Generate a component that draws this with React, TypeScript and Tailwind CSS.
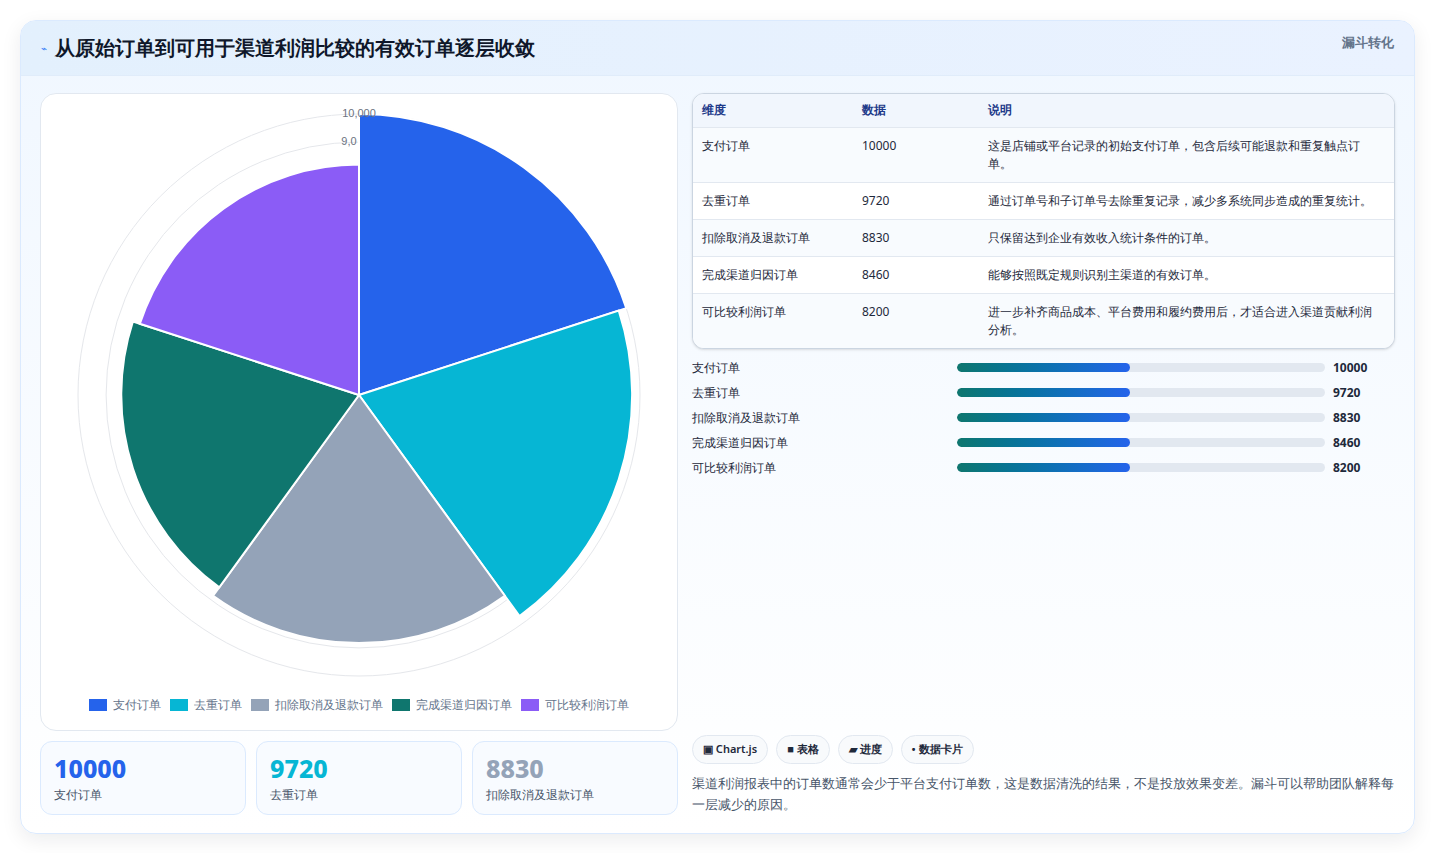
import React from "react";

const rows = [
  { name: "支付订单", value: 10000, desc: "这是店铺或平台记录的初始支付订单，包含后续可能退款和重复触点订单。", color: "#2563eb" },
  { name: "去重订单", value: 9720, desc: "通过订单号和子订单号去除重复记录，减少多系统同步造成的重复统计。", color: "#06b6d4" },
  { name: "扣除取消及退款订单", value: 8830, desc: "只保留达到企业有效收入统计条件的订单。", color: "#94a3b8" },
  { name: "完成渠道归因订单", value: 8460, desc: "能够按照既定规则识别主渠道的有效订单。", color: "#0f766e" },
  { name: "可比较利润订单", value: 8200, desc: "进一步补齐商品成本、平台费用和履约费用后，才适合进入渠道贡献利润分析。", color: "#8b5cf6" },
];

const CX = 318;
const CY = 301;
const SCALE = 0.0281;

function wedge(r: number, a0: number, a1: number) {
  const rad = (d: number) => (d * Math.PI) / 180;
  const x0 = CX + r * Math.cos(rad(a0));
  const y0 = CY + r * Math.sin(rad(a0));
  const x1 = CX + r * Math.cos(rad(a1));
  const y1 = CY + r * Math.sin(rad(a1));
  return `M${CX},${CY} L${x0},${y0} A${r},${r} 0 0 1 ${x1},${y1} Z`;
}

const PolarChart = () => (
  <svg width="636" height="600" viewBox="0 0 636 600">
    {[1, 2, 3, 4, 5, 6, 7, 8, 9, 10].map((k) => (
      <circle key={k} cx={CX} cy={CY} r={k * 1000 * SCALE} fill="none" stroke="#e5e7eb" strokeWidth="1" />
    ))}
    {rows.map((r, i) => (
      <path key={r.name} d={wedge(r.value * SCALE, -90 + i * 72, -18 + i * 72)} fill={r.color} stroke="#fff" strokeWidth="2" />
    ))}
    <text x={CX} y={CY - 278} textAnchor="middle" fontSize="11" fill="#6b7280" fontFamily="Liberation Sans, sans-serif">10,000</text>
    <text x={CX - 10} y={CY - 250} textAnchor="middle" fontSize="11" fill="#6b7280" fontFamily="Liberation Sans, sans-serif">9,0</text>
  </svg>
);

const stats = [
  { v: "10000", l: "支付订单", c: "text-[#2563eb]" },
  { v: "9720", l: "去重订单", c: "text-[#06b6d4]" },
  { v: "8830", l: "扣除取消及退款订单", c: "text-[#94a3b8]" },
];

export default function App() {
  return (
    <div className="min-h-screen bg-white p-5 font-['Inter','Noto_Sans_CJK_SC',sans-serif]">
      <div className="rounded-2xl border border-[#dbeafe] bg-gradient-to-b from-[#f0f7ff] to-white shadow-[0_6px_20px_rgba(15,23,42,0.08)] overflow-hidden">
        {/* Header */}
        <div className="h-[55px] flex items-center justify-between px-5 bg-gradient-to-r from-[#e3f0fd] to-[#eaf2ff] border-b border-[#e0ecfa]">
          <div className="flex items-center gap-2">
            <span className="text-[#3b82f6] text-[10px]">⌁</span>
            <h1 className="text-[20px] font-bold text-[#0f172a]">从原始订单到可用于渠道利润比较的有效订单逐层收敛</h1>
          </div>
          <span className="self-start mt-3 text-[13px] font-semibold text-[#64748b]">漏斗转化</span>
        </div>

        <div className="grid grid-cols-[638px_1fr] gap-[14px] px-[19px] pt-[17px] pb-[18px]">
          {/* Left */}
          <div className="flex flex-col gap-[10px]">
            <div className="h-[638px] rounded-2xl border border-[#e2e8f0] bg-white flex flex-col items-center">
              <PolarChart />
              <div className="flex items-center gap-[9px] text-[12px] text-[#64748b] mt-[2px]">
                {rows.map((r) => (
                  <div key={r.name} className="flex items-center gap-[6px]">
                    <span className="w-[18px] h-[12px]" style={{ background: r.color }} />
                    <span>{r.name}</span>
                  </div>
                ))}
              </div>
            </div>
            <div className="grid grid-cols-3 gap-[10px]">
              {stats.map((s) => (
                <div key={s.v} className="h-[74px] rounded-xl border border-[#dbeafe] bg-[#f8fbff] px-[13px] pt-[10px]">
                  <div className={`text-[25px] font-extrabold leading-[32px] ${s.c}`}>{s.v}</div>
                  <div className="text-[12px] text-[#475569] mt-[2px]">{s.l}</div>
                </div>
              ))}
            </div>
          </div>

          {/* Right */}
          <div className="flex flex-col">
            <div className="rounded-xl border border-[#cbd5e1] bg-white overflow-hidden shadow-sm">
              <table className="w-full text-[12px] text-[#1e293b]">
                <thead>
                  <tr className="bg-[#f1f6fd] text-[#1e3a8a] font-semibold text-left">
                    <th className="h-[33px] pl-[9px] w-[169px] font-semibold">维度</th>
                    <th className="w-[126px] font-semibold">数据</th>
                    <th className="font-semibold">说明</th>
                  </tr>
                </thead>
                <tbody>
                  {rows.map((r, i) => (
                    <tr key={r.name} className={`border-t border-[#e2e8f0] align-top ${i % 2 ? "bg-white" : "bg-[#f8fbfe]"}`}>
                      <td className="pl-[9px] py-[9px] leading-[17px]">{r.name}</td>
                      <td className="py-[9px] leading-[17px]">{r.value}</td>
                      <td className="py-[9px] pr-[12px] leading-[18px]">{r.desc}</td>
                    </tr>
                  ))}
                </tbody>
              </table>
            </div>

            <div className="mt-[10px] flex flex-col gap-[7px]">
              {rows.map((r) => (
                <div key={r.name} className="grid grid-cols-[265px_368px_1fr] items-center h-[18px] text-[12px] text-[#1e293b]">
                  <span>{r.name}</span>
                  <div className="h-[9px] rounded-full bg-[#e2e8f0] overflow-hidden">
                    <div className="h-full w-[47%] rounded-full bg-gradient-to-r from-[#0f766e] to-[#2563eb]" />
                  </div>
                  <span className="pl-[8px] font-bold">{r.value}</span>
                </div>
              ))}
            </div>

            <div className="flex-1" />

            <div className="flex gap-[8px]">
              {["▣ Chart.js", "■ 表格", "▰ 进度", "• 数据卡片"].map((t) => (
                <span key={t} className="h-[29px] px-[10px] rounded-full border border-[#e2e8f0] bg-[#f8fafc] text-[11px] font-semibold text-[#1e293b] flex items-center">{t}</span>
              ))}
            </div>
            <p className="mt-[9px] text-[13px] leading-[21px] text-[#475569]">
              渠道利润报表中的订单数通常会少于平台支付订单数，这是数据清洗的结果，不是投放效果变差。漏斗可以帮助团队解释每一层减少的原因。
            </p>
          </div>
        </div>
      </div>
    </div>
  );
}
